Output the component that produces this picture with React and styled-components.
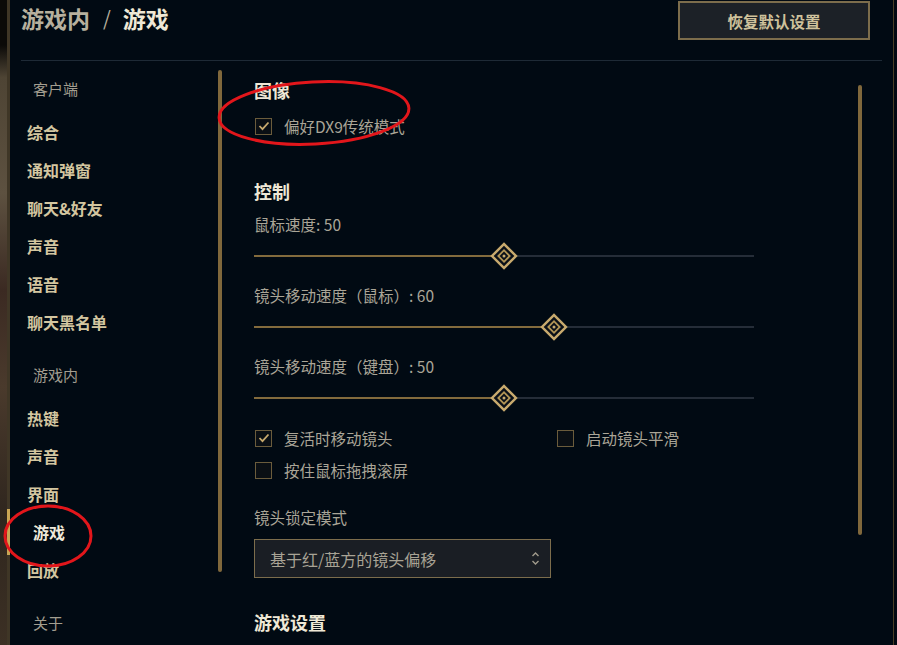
import React from "react";
import styled, { createGlobalStyle } from "styled-components";

const GlobalStyle = createGlobalStyle`
  html, body {
    margin: 0;
    padding: 0;
    background: #010a13;
    overflow: hidden;
  }
  body {
    font-family: "Noto Sans CJK SC", "Noto Sans", "Liberation Sans", sans-serif;
  }
`;

const clientNav = ["综合", "通知弹窗", "聊天&好友", "声音", "语音", "聊天黑名单"];
const gameNav = ["热键", "声音", "界面", "游戏", "回放"];

const sliders = [
    {label: "鼠标速度: 50", value: 50},
    {label: "镜头移动速度（鼠标）: 60", value: 60},
    {label: "镜头移动速度（键盘）: 50", value: 50}
];

const CheckMark = () => (
    <svg width="12" height="10" viewBox="0 0 12 10">
        <polyline points="1.5,5 4.5,8.2 10.5,1.5" fill="none" stroke="#c8aa6e" strokeWidth="1.8"/>
    </svg>
);

const Thumb = () => (
    <svg width="28" height="28" viewBox="0 0 28 28">
        <rect x="5.5" y="5.5" width="17" height="17" transform="rotate(45 14 14)" fill="#0a1018"
              stroke="#c8aa6e" strokeWidth="2.4"/>
        <rect x="10" y="10" width="8" height="8" transform="rotate(45 14 14)" fill="none"
              stroke="#b39656" strokeWidth="1.8"/>
        <circle cx="14" cy="14" r="1.5" fill="#c8aa6e"/>
    </svg>
);

const UpDown = () => (
    <svg width="9" height="15" viewBox="0 0 9 15">
        <polyline points="1.5,5 4.5,2 7.5,5" fill="none" stroke="#a09b8c" strokeWidth="1.4"/>
        <polyline points="1.5,10 4.5,13 7.5,10" fill="none" stroke="#a09b8c" strokeWidth="1.4"/>
    </svg>
);

const Checkbox = ({checked, label}) => (
    <CheckRow>
        <Box>{checked && <CheckMark/>}</Box>
        <CheckLabel>{label}</CheckLabel>
    </CheckRow>
);

const Slider = ({label, value}) => (
    <SliderBlock>
        <FieldLabel>{label}</FieldLabel>
        <Track>
            <Fill style={{width: `${value}%`}}/>
            <ThumbWrap style={{left: `${value}%`}}>
                <Thumb/>
            </ThumbWrap>
        </Track>
    </SliderBlock>
);

const App = () => {
    return (
        <>
            <GlobalStyle/>
            <Frame>
                <Strip/>
                <Panel>
                    <Header>
                        <Title>
                            <Crumb>游戏内</Crumb>
                            <Slash>/</Slash>
                            <Current>游戏</Current>
                        </Title>
                        <ResetButton>恢复默认设置</ResetButton>
                    </Header>

                    <Body>
                        <NavColumn>
                            <NavList>
                                <SectionLabel first>客户端</SectionLabel>
                                {clientNav.map(item => <NavItem key={item}>{item}</NavItem>)}
                                <SectionLabel>游戏内</SectionLabel>
                                {gameNav.map(item => (
                                    <NavItem key={item} active={item === "游戏"}>{item}</NavItem>
                                ))}
                                <SectionLabel>关于</SectionLabel>
                            </NavList>
                            <NavScroll/>
                        </NavColumn>

                        <Content>
                            <Heading>图像</Heading>
                            <Spacer h={14}/>
                            <Checkbox checked label="偏好DX9传统模式"/>

                            <Spacer h={43}/>
                            <Heading>控制</Heading>
                            {sliders.map(s => <Slider key={s.label} {...s}/>)}

                            <Spacer h={20}/>
                            <CheckGrid>
                                <Checkbox checked label="复活时移动镜头"/>
                                <Checkbox label="启动镜头平滑"/>
                                <Checkbox label="按住鼠标拖拽滚屏"/>
                            </CheckGrid>

                            <Spacer h={27}/>
                            <FieldLabel>镜头锁定模式</FieldLabel>
                            <Spacer h={12}/>
                            <Select>
                                <span>基于红/蓝方的镜头偏移</span>
                                <UpDown/>
                            </Select>

                            <Spacer h={32}/>
                            <Heading>游戏设置</Heading>
                        </Content>
                        <ContentScroll/>
                    </Body>
                </Panel>
                <Edge/>

                <Annotations viewBox="0 0 897 645" width="897" height="645">
                    <ellipse cx="314" cy="113" rx="95" ry="31" fill="none" stroke="#e2161b" strokeWidth="3"
                             transform="rotate(-3 314 113)"/>
                    <ellipse cx="48" cy="536" rx="43" ry="30" fill="none" stroke="#e2161b" strokeWidth="3"/>
                </Annotations>
            </Frame>
        </>
    );
};

export default App;


const Frame = styled.div`
  position: relative;
  width: 897px;
  height: 645px;
  display: flex;
  overflow: hidden;
  background: #010a13;
`;

const Strip = styled.div`
  width: 7px;
  background: linear-gradient(180deg, #0b0a08 0%, #0b0a08 7%, #4e4434 12%, #5d5140 30%, #3b2a22 45%,
  #4a3a2c 60%, #2f261e 80%, #3c3024 100%);
`;

const Panel = styled.div`
  flex: 1;
  display: flex;
  flex-direction: column;
  border-left: 3px solid #3f3626;
  border-right: 1px solid #4b3f26;
  background: #010a13;
`;

const Edge = styled.div`
  width: 3px;
  background: #030912;
`;

const Header = styled.div`
  height: 60px;
  margin: 0 11px 0 11px;
  display: flex;
  justify-content: space-between;
  align-items: flex-start;
  border-bottom: 1px solid #1e2a36;
  flex-shrink: 0;
`;

const Title = styled.div`
  margin-top: 3px;
  display: flex;
  align-items: center;
  font-size: 23px;
  font-weight: 700;
  line-height: 30px;
`;

const Crumb = styled.span`
  color: #b7b09e;
`;

const Slash = styled.span`
  color: #b7b09e;
  font-weight: 400;
  font-size: 20px;
  margin: 0 12px 0 13px;
`;

const Current = styled.span`
  color: #efe8d6;
`;

const ResetButton = styled.div`
  margin-top: 1px;
  margin-right: 12px;
  width: 188px;
  height: 35px;
  display: flex;
  align-items: center;
  justify-content: center;
  box-sizing: content-box;
  background: #1c2127;
  border: 2px solid #7c6d4c;
  color: #cfc29c;
  font-size: 15.5px;
  font-weight: 700;
`;

const Body = styled.div`
  flex: 1;
  display: flex;
  min-height: 0;
`;

const NavColumn = styled.div`
  width: 212px;
  display: flex;
  flex-shrink: 0;
`;

const NavList = styled.div`
  flex: 1;
  display: flex;
  flex-direction: column;
  padding-top: 16px;
`;

const SectionLabel = styled.div`
  height: 24px;
  line-height: 24px;
  margin-top: ${({first}) => first ? "0" : "22px"};
  margin-bottom: 12px;
  padding-left: 23px;
  font-size: 15px;
  color: #a39e90;
`;

const NavItem = styled.div`
  position: relative;
  height: 38px;
  line-height: 38px;
  padding-left: ${({active}) => active ? "23px" : "17px"};
  font-size: 16px;
  font-weight: 700;
  color: ${({active}) => active ? "#f0eadb" : "#d3c6a0"};

  &::before {
    content: "";
    display: ${({active}) => active ? "block" : "none"};
    position: absolute;
    left: -3px;
    top: -4px;
    bottom: -4px;
    width: 3px;
    background: #c8a554;
  }
`;

const NavScroll = styled.div`
  width: 4px;
  height: 502px;
  margin-top: 9px;
  border-radius: 2px;
  background: #80683c;
`;

const Content = styled.div`
  width: 604px;
  margin-left: 32px;
  padding-top: 17px;
  display: flex;
  flex-direction: column;
  flex-shrink: 0;
`;

const ContentScroll = styled.div`
  width: 4px;
  height: 450px;
  margin-top: 24px;
  border-radius: 2px;
  background: #80683c;
`;

const Spacer = styled.div`
  height: ${({h}) => h}px;
  flex-shrink: 0;
`;

const Heading = styled.div`
  height: 24px;
  line-height: 24px;
  font-size: 18px;
  font-weight: 700;
  color: #efe8d6;
`;

const CheckRow = styled.div`
  height: 20px;
  display: flex;
  align-items: center;
  gap: 12px;
  padding-left: 1px;
`;

const Box = styled.div`
  width: 15px;
  height: 15px;
  border: 1px solid #6b5c3c;
  background: #0a0f14;
  display: flex;
  align-items: center;
  justify-content: center;
`;

const CheckLabel = styled.span`
  font-size: 15.5px;
  color: #aaa597;
`;

const CheckGrid = styled.div`
  display: grid;
  grid-template-columns: 302px 1fr;
  row-gap: 12px;
`;

const SliderBlock = styled.div`
  display: flex;
  flex-direction: column;
  margin-top: 11px;

  & + & {
    margin-top: 19px;
  }
`;

const FieldLabel = styled.div`
  height: 20px;
  line-height: 20px;
  font-size: 15.5px;
  color: #aaa597;
`;

const Track = styled.div`
  position: relative;
  width: 500px;
  height: 2px;
  margin: 21px 0 9px;
  background: #252d38;
`;

const Fill = styled.div`
  height: 100%;
  background: #836b3d;
`;

const ThumbWrap = styled.div`
  position: absolute;
  top: 50%;
  width: 28px;
  height: 28px;
  transform: translate(-50%, -50%);
  display: flex;
`;

const Select = styled.div`
  width: 270px;
  height: 37px;
  padding: 0 10px 0 15px;
  display: flex;
  align-items: center;
  justify-content: space-between;
  background: #1a1e24;
  border: 1px solid #7c6d4c;
  font-size: 16px;
  color: #a8a395;
`;

const Annotations = styled.svg`
  position: absolute;
  left: 0;
  top: 0;
  pointer-events: none;
`;
